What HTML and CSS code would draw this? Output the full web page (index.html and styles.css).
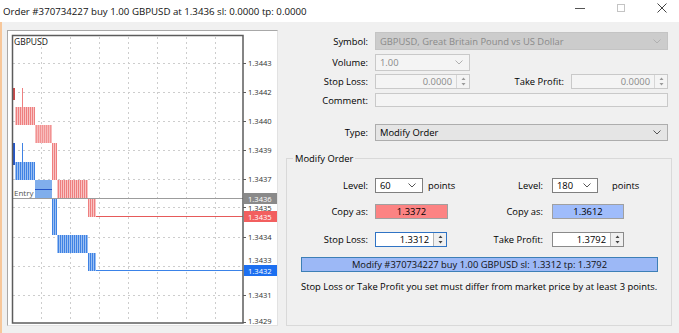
FILE: index.html
```html
<!DOCTYPE html>
<html lang="en">
<head>
    <meta charset="UTF-8">
    <meta name="viewport" content="width=device-width, initial-scale=1.0">
    <title>Order #370734227</title>
    <link rel="stylesheet" href="styles.css">
</head>
<body>
    <header class="titlebar">
        <span class="title">Order #370734227 buy 1.00 GBPUSD at 1.3436 sl: 0.0000 tp: 0.0000</span>
        <div class="window-controls">
            <span class="win-btn">
                <svg width="10" height="10" viewBox="0 0 10 10"><line x1="0" y1="5.5" x2="10" y2="5.5" stroke="#555" stroke-width="1"/></svg>
            </span>
            <span class="win-btn">
                <svg width="10" height="10" viewBox="0 0 10 10"><rect x="1.5" y="1.5" width="7" height="7" fill="none" stroke="#c4c4c4" stroke-width="1"/></svg>
            </span>
            <span class="win-btn">
                <svg width="10" height="10" viewBox="0 0 10 10"><path d="M0.5 0.5 L9.5 9.5 M9.5 0.5 L0.5 9.5" stroke="#444" stroke-width="1"/></svg>
            </span>
        </div>
    </header>

    <div class="main">
        <div class="chart-pane">
            <div class="chart-frame">
                <svg class="chart" width="269" height="294" viewBox="8 31 269 294">
                    <defs>
                        <pattern id="redbars" width="2" height="4" patternUnits="userSpaceOnUse">
                            <rect width="2" height="4" fill="#f9c4c4"/>
                            <rect width="1" height="4" fill="#ee7f7f"/>
                        </pattern>
                        <pattern id="bluebars" width="2" height="4" patternUnits="userSpaceOnUse">
                            <rect width="2" height="4" fill="#9cc0f2"/>
                            <rect width="1" height="4" fill="#3f82e4"/>
                        </pattern>
                    </defs>
                    <rect x="8" y="31" width="269" height="294" fill="#fff"/>

                    <!-- grid -->
                    <g stroke="#cdcdcd" stroke-width="1" stroke-dasharray="2 3">
                        <line x1="13" y1="63.5" x2="243" y2="63.5"/>
                        <line x1="13" y1="92.5" x2="243" y2="92.5"/>
                        <line x1="13" y1="121.5" x2="243" y2="121.5"/>
                        <line x1="13" y1="150.5" x2="243" y2="150.5"/>
                        <line x1="13" y1="179.5" x2="243" y2="179.5"/>
                        <line x1="13" y1="207.5" x2="243" y2="207.5"/>
                        <line x1="13" y1="237.5" x2="243" y2="237.5"/>
                        <line x1="13" y1="266.5" x2="243" y2="266.5"/>
                        <line x1="13" y1="295.5" x2="243" y2="295.5"/>
                        <line x1="41.5" y1="37" x2="41.5" y2="322"/>
                        <line x1="70.5" y1="37" x2="70.5" y2="322"/>
                        <line x1="99.5" y1="37" x2="99.5" y2="322"/>
                        <line x1="128.5" y1="37" x2="128.5" y2="322"/>
                        <line x1="157.5" y1="37" x2="157.5" y2="322"/>
                        <line x1="186.5" y1="37" x2="186.5" y2="322"/>
                        <line x1="215.5" y1="37" x2="215.5" y2="322"/>
                    </g>

                    <!-- ask bars -->
                    <rect x="12" y="88" width="3" height="12" fill="#c94a4a"/>
                    <rect x="22" y="88" width="1" height="37" fill="#ee7f7f"/>
                    <rect x="15" y="107" width="20" height="18" fill="url(#redbars)"/>
                    <rect x="35" y="125" width="17" height="18" fill="#f6b0b0"/>
                    <rect x="35" y="125" width="17" height="18" fill="url(#redbars)" opacity="0.6"/>
                    <rect x="52" y="143" width="5" height="37" fill="url(#redbars)"/>
                    <rect x="57" y="180" width="31" height="18" fill="url(#redbars)"/>
                    <rect x="88" y="198" width="8" height="19" fill="url(#redbars)"/>
                    <line x1="96" y1="216.5" x2="243" y2="216.5" stroke="#e65a5a"/>

                    <!-- bid bars -->
                    <rect x="12" y="143" width="3" height="22" fill="#2456c8"/>
                    <rect x="22" y="143" width="1" height="37" fill="#3f82e4"/>
                    <rect x="15" y="162" width="20" height="18" fill="url(#bluebars)"/>
                    <rect x="35" y="180" width="17" height="18" fill="#80aeec"/>
                    <line x1="35" y1="189.5" x2="52" y2="189.5" stroke="#2456c8"/>
                    <rect x="52" y="198" width="5" height="37" fill="url(#bluebars)"/>
                    <rect x="57" y="235" width="31" height="18" fill="url(#bluebars)"/>
                    <rect x="88" y="253" width="8" height="18" fill="url(#bluebars)"/>
                    <line x1="96" y1="270.5" x2="243" y2="270.5" stroke="#3a82e8"/>

                    <!-- entry -->
                    <line x1="12" y1="198.5" x2="243" y2="198.5" stroke="#9c9c9c"/>
                    <text class="entry" x="14" y="196">Entry</text>
                    <text class="symbol" x="14" y="45">GBPUSD</text>

                    <!-- frame -->
                    <rect x="12.5" y="35.5" width="230.5" height="287.5" fill="none" stroke="#5c5c5c" stroke-width="1.5"/>

                    <!-- price axis -->
                    <g stroke="#5c5c5c">
                        <line x1="243" y1="63.5" x2="246" y2="63.5"/>
                        <line x1="243" y1="92.5" x2="246" y2="92.5"/>
                        <line x1="243" y1="121.5" x2="246" y2="121.5"/>
                        <line x1="243" y1="150.5" x2="246" y2="150.5"/>
                        <line x1="243" y1="179.5" x2="246" y2="179.5"/>
                        <line x1="243" y1="207.5" x2="246" y2="207.5"/>
                        <line x1="243" y1="237.5" x2="246" y2="237.5"/>
                        <line x1="243" y1="295.5" x2="246" y2="295.5"/>
                        <line x1="243" y1="322.5" x2="246" y2="322.5"/>
                    </g>
                    <g class="axis">
                        <text x="248" y="66">1.3443</text>
                        <text x="248" y="95">1.3442</text>
                        <text x="248" y="124">1.3440</text>
                        <text x="248" y="153">1.3439</text>
                        <text x="248" y="182">1.3437</text>
                        <text x="248" y="210.5">1.3435</text>
                        <text x="248" y="240">1.3434</text>
                        <text class="hidden-tick" x="248" y="263">1.3433</text>
                        <text x="248" y="298">1.3431</text>
                        <text x="248" y="324">1.3429</text>
                    </g>
                    <rect x="244" y="193" width="33" height="11" fill="#8a8a8a"/>
                    <text class="tag" x="248" y="201.5">1.3436</text>
                    <rect x="244" y="211" width="33" height="11" fill="#f25f5f"/>
                    <text class="tag" x="248" y="219.5">1.3435</text>
                    <rect x="244" y="265" width="33" height="11" fill="#1c6ff0"/>
                    <text class="tag" x="248" y="273.5">1.3432</text>
                </svg>
            </div>
        </div>

        <div class="form-pane">
            <div class="row row-symbol">
                <label class="lbl">Symbol:</label>
                <div class="field select disabled wide">
                    <span class="value">GBPUSD, Great Britain Pound vs US Dollar</span>
                    <svg class="chev" width="8" height="5" viewBox="0 0 8 5"><polyline points="0.5,0.5 4,4 7.5,0.5" fill="none" stroke="#b0b0b0"/></svg>
                </div>
            </div>
            <div class="row row-volume">
                <label class="lbl">Volume:</label>
                <div class="field select soft narrow">
                    <span class="value">1.00</span>
                    <svg class="chev" width="8" height="5" viewBox="0 0 8 5"><polyline points="0.5,0.5 4,4 7.5,0.5" fill="none" stroke="#b0b0b0"/></svg>
                </div>
            </div>
            <div class="row row-stops">
                <label class="lbl">Stop Loss:</label>
                <div class="field spin-field soft narrow">
                    <span class="value num">0.0000</span>
                    <span class="spin">
                        <svg width="5" height="9" viewBox="0 0 5 9"><path d="M2.5 0.5 L4.5 3 L0.5 3 Z M0.5 6 L4.5 6 L2.5 8.5 Z" fill="#9a9a9a"/></svg>
                    </span>
                </div>
                <label class="lbl lbl-tp">Take Profit:</label>
                <div class="field spin-field soft tp">
                    <span class="value num">0.0000</span>
                    <span class="spin">
                        <svg width="5" height="9" viewBox="0 0 5 9"><path d="M2.5 0.5 L4.5 3 L0.5 3 Z M0.5 6 L4.5 6 L2.5 8.5 Z" fill="#9a9a9a"/></svg>
                    </span>
                </div>
            </div>
            <div class="row row-comment">
                <label class="lbl">Comment:</label>
                <div class="field soft wide"></div>
            </div>
            <div class="row row-type">
                <label class="lbl">Type:</label>
                <div class="field select type wide">
                    <span class="value">Modify Order</span>
                    <svg class="chev" width="8" height="5" viewBox="0 0 8 5"><polyline points="0.5,0.5 4,4 7.5,0.5" fill="none" stroke="#555"/></svg>
                </div>
            </div>

            <div class="group">
                <span class="legend">Modify Order</span>

                <div class="grow grow-level">
                    <div class="half-left">
                        <label class="lbl">Level:</label>
                        <div class="field select level-l">
                            <span class="value">60</span>
                            <svg class="chev" width="8" height="5" viewBox="0 0 8 5"><polyline points="0.5,0.5 4,4 7.5,0.5" fill="none" stroke="#555"/></svg>
                        </div>
                        <span class="unit">points</span>
                    </div>
                    <div class="half-right">
                        <label class="lbl">Level:</label>
                        <div class="field select level-r">
                            <span class="value">180</span>
                            <svg class="chev" width="8" height="5" viewBox="0 0 8 5"><polyline points="0.5,0.5 4,4 7.5,0.5" fill="none" stroke="#555"/></svg>
                        </div>
                        <span class="unit unit-r">points</span>
                    </div>
                </div>

                <div class="grow grow-copy">
                    <div class="half-left">
                        <label class="lbl">Copy as:</label>
                        <div class="copy copy-sl">1.3372</div>
                    </div>
                    <div class="half-right">
                        <label class="lbl">Copy as:</label>
                        <div class="copy copy-tp">1.3612</div>
                    </div>
                </div>

                <div class="grow grow-stops">
                    <div class="half-left">
                        <label class="lbl">Stop Loss:</label>
                        <div class="field spin-field live focus">
                            <span class="value num">1.3312</span>
                            <span class="spin">
                                <svg width="5" height="9" viewBox="0 0 5 9"><path d="M2.5 0.5 L4.5 3 L0.5 3 Z M0.5 6 L4.5 6 L2.5 8.5 Z" fill="#444"/></svg>
                            </span>
                        </div>
                    </div>
                    <div class="half-right">
                        <label class="lbl">Take Profit:</label>
                        <div class="field spin-field live">
                            <span class="value num">1.3792</span>
                            <span class="spin">
                                <svg width="5" height="9" viewBox="0 0 5 9"><path d="M2.5 0.5 L4.5 3 L0.5 3 Z M0.5 6 L4.5 6 L2.5 8.5 Z" fill="#444"/></svg>
                            </span>
                        </div>
                    </div>
                </div>

                <button class="modify-btn">Modify #370734227 buy 1.00 GBPUSD sl: 1.3312 tp: 1.3792</button>

                <p class="note">Stop Loss or Take Profit you set must differ from market price by at least 3 points.</p>
            </div>
        </div>
    </div>
</body>
</html>
```

FILE: styles.css
```css
* {
    margin: 0;
    padding: 0;
    box-sizing: border-box;
}

body {
    font-family: 'Open Sans', sans-serif;
    font-size: 9.4px;
    color: #000;
    background-color: #f0f0f0;
    width: 679px;
    height: 333px;
    overflow: hidden;
}

/* title bar */
.titlebar {
    height: 22px;
    background-color: #fff;
    display: flex;
    align-items: center;
    justify-content: space-between;
    padding-left: 3px;
}

.title {
    font-size: 9.7px;
    color: #111;
}

.window-controls {
    display: flex;
    margin-right: -3px;
    align-self: flex-start;
    padding-top: 3px;
}

.win-btn {
    width: 41px;
    height: 10px;
    display: flex;
    justify-content: center;
}

/* layout */
.main {
    display: flex;
    height: 311px;
    border-left: 2px solid #f7c79a;
}

.chart-pane {
    width: 284px;
    padding: 8px 0 0 5px;
}

.chart-frame {
    width: 271px;
    height: 296px;
    border: 1px solid #a8a8a8;
    border-right-color: #e2e2e2;
    border-bottom-color: #e2e2e2;
}

.chart {
    display: block;
}

.chart text {
    font-family: 'Open Sans', sans-serif;
}

.chart .symbol {
    font-size: 8.5px;
    fill: #111;
}

.chart .entry {
    font-size: 8px;
    fill: #555;
}

.chart .axis text {
    font-size: 7.6px;
    fill: #333;
}

.chart .tag {
    font-size: 7.6px;
    fill: #fff;
}

.form-pane {
    flex: 1;
    padding-top: 10px;
}

/* rows */
.row {
    display: flex;
    align-items: center;
}

.lbl {
    width: 82px;
    margin-right: 7px;
    text-align: right;
    white-space: nowrap;
}

.row-symbol { height: 18px; }
.row-volume { height: 17px; margin-top: 4px; }
.row-stops { height: 15px; margin-top: 3px; }
.row-comment { height: 14px; margin-top: 4px; }
.row-type { height: 17px; margin-top: 17px; }

.field {
    height: 100%;
    display: flex;
    align-items: center;
    border: 1px solid #c9c9c9;
    background-color: #f4f4f4;
    padding-left: 4px;
    position: relative;
}

.field .value {
    flex: 1;
    white-space: nowrap;
}

.wide { width: 293px; }
.narrow { width: 95px; }
.tp { width: 97px; }

.lbl-tp {
    width: 94px;
}

.disabled {
    background-color: #cccccc;
    border-color: #c4c4c4;
    color: #8a8a8a;
}

.soft {
    color: #8a8a8a;
}

.select .chev {
    margin-right: 6px;
}

.type {
    background-color: #e5e5e5;
    border-color: #adadad;
}

.spin-field {
    padding-left: 0;
}

.spin-field .num {
    text-align: right;
    padding-right: 4px;
}

.spin {
    width: 13px;
    height: 100%;
    border-left: 1px solid #d6d6d6;
    display: flex;
    align-items: center;
    justify-content: center;
}

/* modify order group */
.group {
    position: relative;
    width: 386px;
    height: 168px;
    margin-top: 17px;
    border: 1px solid #d9d9d9;
    padding-top: 19px;
}

.legend {
    position: absolute;
    top: -7px;
    left: 6px;
    padding: 0 2px;
    background-color: #f0f0f0;
    line-height: 13px;
}

.grow {
    display: flex;
    align-items: center;
    height: 15px;
}

.grow-copy { margin-top: 11px; }
.grow-stops { margin-top: 13px; }

.half-left {
    width: 183px;
    height: 100%;
    display: flex;
    align-items: center;
}

.half-left .lbl {
    width: 81px;
}

.half-right {
    height: 100%;
    display: flex;
    align-items: center;
}

.half-right .lbl {
    width: 73px;
    margin-right: 9px;
}

.level-l,
.level-r {
    background-color: #fff;
    border-color: #7f7f7f;
}

.level-l { width: 48px; }
.level-r { width: 46px; }

.unit {
    margin-left: 5px;
}

.unit-r {
    margin-left: 14px;
}

.copy {
    width: 73px;
    height: 100%;
    border: 1px solid #a0a0a0;
    text-align: center;
    line-height: 13px;
}

.copy-sl {
    background-color: #fc8383;
}

.copy-tp {
    width: 72px;
    background-color: #9fbcfb;
}

.live {
    width: 72px;
    background-color: #fff;
    border-color: #8a8a8a;
}

.live .spin {
    background-color: #f0f0f0;
    border-left-color: #b5b5b5;
}

.focus {
    border-color: #2f73c4;
}

.modify-btn {
    display: block;
    width: 357px;
    height: 15px;
    margin: 10px 0 0 14px;
    font-family: 'Open Sans', sans-serif;
    font-size: 9.4px;
    color: #111;
    background-color: #9cb8f6;
    border: 1px solid #3d7fb6;
    line-height: 13px;
}

.note {
    margin: 8px 0 0 14px;
    line-height: 14px;
    white-space: nowrap;
}
```
